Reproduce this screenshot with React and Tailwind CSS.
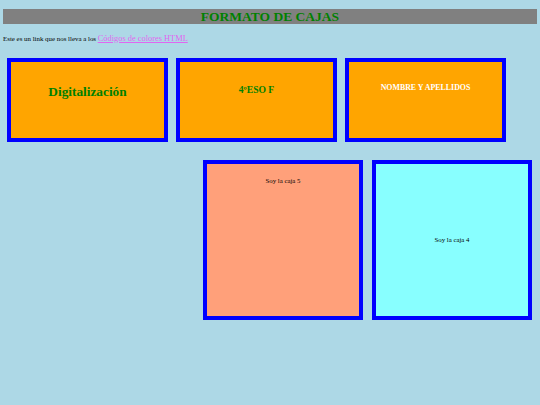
export default function App() {
  const serif = { fontFamily: '"Liberation Serif", "Times New Roman", serif' };
  return (
    <div className="w-[540px] h-[405px] bg-[#add8e6] overflow-hidden" style={serif}>
      <div className="pt-[9px] px-[3px]">
        <div className="h-[15px] bg-[#808080] flex items-center justify-center">
          <h1 className="text-[13.5px] leading-none font-bold text-[#008000]">FORMATO DE CAJAS</h1>
        </div>
      </div>
      <p className="mt-[9px] pl-[3px] h-[10px] flex items-end text-[6.9px] leading-none text-black">
        <span>Este es un link que nos lleva a los&nbsp;</span>
        <a href="#" className="text-[8.4px] leading-none text-[#e066f0] underline">Códigos de colores HTML</a>
      </p>
      <div className="mt-[15px] pl-[7px] flex gap-[8px]">
        <div className="w-[161px] h-[84px] border-[4px] border-[#0000ff] bg-[#ffa500] pt-[22px] text-center">
          <div className="text-[13.3px] leading-[16px] font-bold text-[#008000]">Digitalización</div>
        </div>
        <div className="w-[161px] h-[84px] border-[4px] border-[#0000ff] bg-[#ffa500] pt-[22px] text-center">
          <div className="text-[9.6px] leading-[12px] font-bold text-[#008000]">4ºESO F</div>
        </div>
        <div className="w-[161px] h-[84px] border-[4px] border-[#0000ff] bg-[#ffa500] pt-[21px] text-center">
          <div className="text-[7.9px] leading-[9px] font-bold text-white">NOMBRE Y APELLIDOS</div>
        </div>
      </div>
      <div className="mt-[18px] pr-[8px] flex justify-end gap-[9px]">
        <div className="w-[160px] h-[160px] border-[4px] border-[#0000ff] bg-[#ffa07a] pt-[13px] text-center">
          <div className="text-[6.8px] leading-[8px] text-black">Soy la caja 5</div>
        </div>
        <div className="w-[160px] h-[160px] border-[4px] border-[#0000ff] bg-[#88ffff] flex items-center justify-center">
          <div className="text-[6.8px] leading-[8px] text-black">Soy la caja 4</div>
        </div>
      </div>
    </div>
  );
}
